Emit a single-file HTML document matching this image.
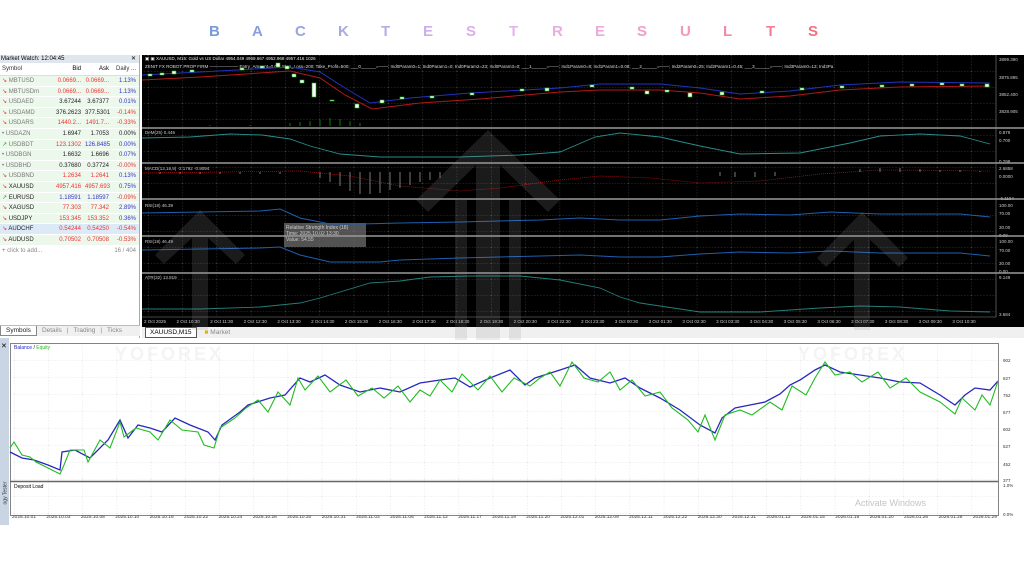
<!DOCTYPE html>
<html><head><meta charset="utf-8"><style>
*{margin:0;padding:0;box-sizing:border-box}
body{width:1024px;height:576px;background:#fff;position:relative;overflow:hidden;font-family:"Liberation Sans",sans-serif}
.t{position:absolute;top:23px;left:0;width:1024px;height:24px}
.t span{position:absolute;font-size:15px;font-weight:bold;top:0}
.mw{position:absolute;left:0;top:55px;width:140px;height:283px;background:#fff;border-right:1px solid #aaa;font-size:6px}
.mwh{height:8px;background:#dfe6ee;padding-left:1px;line-height:8px;font-size:6px;position:relative}
.row{display:flex;height:10.6px;line-height:10.6px;border-bottom:1px solid #fff}
.row div{padding:0 2px}
.c1{width:54px;color:#777}.c2{width:29px;text-align:right}.c3{width:28px;text-align:right}.c4{width:27px;text-align:right;color:#33c}
.g{background:#edf8ec}
.r{color:#e33}.k{color:#222}.b{color:#33c}
.tabs{position:absolute;left:0;top:325px;width:140px;height:11px;font-size:6.5px;color:#888;background:#f0f0f0;border-top:1px solid #bbb}
.chart{position:absolute;left:142px;top:55px;width:882px;height:272px;background:#000}
.ax{position:absolute;font-size:4.5px;color:#ccc;white-space:nowrap}
.tb{position:absolute;left:142px;top:327px;width:882px;height:11px;background:#f0f0f0;font-size:6.5px}
.tester{position:absolute;left:0;top:338px;width:1024px;height:187px;background:#fff}
.dl{position:absolute;left:12px;top:515px;width:985px;display:flex;justify-content:space-between;font-size:4.8px;color:#333}
</style></head><body>
<div class="t">
<span style="left:209px;color:#7a9ad8">B</span><span style="left:252px;color:#8aa0dc">A</span><span style="left:295px;color:#9aa6de">C</span><span style="left:338px;color:#a8aae0">K</span><span style="left:381px;color:#b8aee6">T</span><span style="left:423px;color:#cdb0ea">E</span><span style="left:466px;color:#dab0ea">S</span><span style="left:509px;color:#e4b4ec">T</span><span style="left:552px;color:#e8aee0">R</span><span style="left:595px;color:#eeaad8">E</span><span style="left:637px;color:#f29ec8">S</span><span style="left:680px;color:#f398b8">U</span><span style="left:723px;color:#f48aa4">L</span><span style="left:766px;color:#f47e94">T</span><span style="left:808px;color:#f27080">S</span>
</div>

<div class="mw">
<div class="mwh">Market Watch: 12:04:45<span style="position:absolute;right:3px">✕</span></div>
<div class="row" style="background:#fff;border-bottom:1px solid #ddd;height:13px;line-height:13px"><div class="c1" style="color:#333">Symbol</div><div class="c2">Bid</div><div class="c3">Ask</div><div class="c4" style="color:#333">Daily ...</div></div>
<div class="row g"><div class="c1"><span class="r">↘</span> MBTUSD</div><div class="c2 r">0.0669...</div><div class="c3 r">0.0669...</div><div class="c4">1.13%</div></div>
<div class="row g"><div class="c1"><span class="r">↘</span> MBTUSDm</div><div class="c2 r">0.0669...</div><div class="c3 r">0.0669...</div><div class="c4">1.13%</div></div>
<div class="row g"><div class="c1"><span class="r">↘</span> USDAED</div><div class="c2 k">3.67244</div><div class="c3 k">3.67377</div><div class="c4">0.01%</div></div>
<div class="row g"><div class="c1"><span class="r">↘</span> USDAMD</div><div class="c2 k">376.2623</div><div class="c3 k">377.5301</div><div class="c4 r">-0.14%</div></div>
<div class="row g"><div class="c1"><span class="r">↘</span> USDARS</div><div class="c2 r">1440.2...</div><div class="c3 r">1491.7...</div><div class="c4 r">-0.33%</div></div>
<div class="row g"><div class="c1">• USDAZN</div><div class="c2 k">1.6947</div><div class="c3 k">1.7053</div><div class="c4 k">0.00%</div></div>
<div class="row g"><div class="c1"><span style="color:#2a2">↗</span> USDBDT</div><div class="c2 r">123.1302</div><div class="c3 b">126.8485</div><div class="c4">0.00%</div></div>
<div class="row g"><div class="c1">• USDBGN</div><div class="c2 k">1.6632</div><div class="c3 k">1.6696</div><div class="c4">0.07%</div></div>
<div class="row g"><div class="c1">• USDBHD</div><div class="c2 k">0.37680</div><div class="c3 k">0.37724</div><div class="c4 r">-0.00%</div></div>
<div class="row g"><div class="c1"><span class="r">↘</span> USDBND</div><div class="c2 r">1.2634</div><div class="c3 r">1.2641</div><div class="c4">0.13%</div></div>
<div class="row g"><div class="c1" style="color:#222"><span class="r">↘</span> XAUUSD</div><div class="c2 r">4957.416</div><div class="c3 r">4957.693</div><div class="c4">0.75%</div></div>
<div class="row g"><div class="c1" style="color:#222"><span style="color:#2a2">↗</span> EURUSD</div><div class="c2 b">1.18591</div><div class="c3 b">1.18597</div><div class="c4 r">-0.09%</div></div>
<div class="row g"><div class="c1" style="color:#222"><span class="r">↘</span> XAGUSD</div><div class="c2 r">77.303</div><div class="c3 r">77.342</div><div class="c4">2.89%</div></div>
<div class="row g"><div class="c1" style="color:#222"><span class="r">↘</span> USDJPY</div><div class="c2 r">153.345</div><div class="c3 r">153.352</div><div class="c4">0.36%</div></div>
<div class="row" style="background:#dceaf8"><div class="c1" style="color:#222"><span class="r">↘</span> AUDCHF</div><div class="c2 r">0.54244</div><div class="c3 r">0.54250</div><div class="c4 r">-0.54%</div></div>
<div class="row g"><div class="c1" style="color:#222"><span class="r">↘</span> AUDUSD</div><div class="c2 r">0.70502</div><div class="c3 r">0.70508</div><div class="c4 r">-0.53%</div></div>
<div class="row"><div class="c1" style="width:111px;color:#888"><span style="color:#2a2">+</span> click to add...</div><div class="c4" style="color:#888">16 / 404</div></div>
</div>
<div class="tabs"><span style="display:inline-block;background:#fff;color:#222;padding:1px 5px;border:1px solid #888;border-top:none">Symbols</span><span style="padding:0 5px">Details</span>|<span style="padding:0 5px">Trading</span>|<span style="padding:0 5px">Ticks</span></div>

<div class="chart">
<div class="ax" style="left:3px;top:1px;color:#eee">▣ ▣ XAUUSD, M15:  Gold vs US Dollar  4954.049 4959.667 4952.968 4957.416  1026</div>
<div class="ax" style="left:3px;top:9px;color:#ddd">ZENIT FX ROBOT PROP FIRM ───────── Entry_Amount=0.01; Stop_Loss=200; Take_Profit=500; ___0______=───; Ind0Param0=1; Ind0Param1=0; Ind0Param2=23; Ind0Param3=0; ___1______=───; Ind1Param0=8; Ind1Param1=0.08; ___2______=───; Ind2Param0=25; Ind2Param1=0.45; ___3______=───; Ind3Param0=13; Ind3Pa</div>
<div class="ax" style="left:3px;top:75px">DeM(25) 0.446</div>
<div class="ax" style="left:3px;top:111px">MACD(13,18,9) -2.1792 -0.9094</div>
<div class="ax" style="left:3px;top:148px">RSI(18) 46.39</div>
<div class="ax" style="left:3px;top:184px">RSI(19) 46.49</div>
<div class="ax" style="left:3px;top:220px">ATR(32) 13.819</div>
<div class="ax" style="left:857px;top:2px">3899.390</div><div class="ax" style="left:857px;top:20px">3875.895</div><div class="ax" style="left:857px;top:37px">3852.400</div><div class="ax" style="left:857px;top:54px">3828.905</div>
<div class="ax" style="left:857px;top:75px">0.879</div><div class="ax" style="left:857px;top:83px">0.700</div><div class="ax" style="left:857px;top:104px">0.298</div>
<div class="ax" style="left:857px;top:111px">2.6858</div><div class="ax" style="left:857px;top:119px">0.0000</div><div class="ax" style="left:857px;top:141px">-6.1164</div>
<div class="ax" style="left:857px;top:148px">100.00</div><div class="ax" style="left:857px;top:156px">70.00</div><div class="ax" style="left:857px;top:170px">30.00</div><div class="ax" style="left:857px;top:178px">0.00</div>
<div class="ax" style="left:857px;top:184px">100.00</div><div class="ax" style="left:857px;top:193px">70.00</div><div class="ax" style="left:857px;top:206px">30.00</div><div class="ax" style="left:857px;top:214px">0.00</div>
<div class="ax" style="left:857px;top:220px">9.149</div><div class="ax" style="left:857px;top:257px">3.684</div>
<div class="ax" style="left:2px;top:264px;width:832px;display:flex;justify-content:space-between"><span>2 Oct 2025</span><span>2 Oct 10:30</span><span>2 Oct 11:30</span><span>2 Oct 12:30</span><span>2 Oct 13:30</span><span>2 Oct 14:30</span><span>2 Oct 15:30</span><span>2 Oct 16:30</span><span>2 Oct 17:30</span><span>2 Oct 18:30</span><span>2 Oct 19:30</span><span>2 Oct 20:30</span><span>2 Oct 22:30</span><span>2 Oct 23:30</span><span>3 Oct 00:30</span><span>3 Oct 01:30</span><span>3 Oct 02:30</span><span>3 Oct 03:30</span><span>3 Oct 04:30</span><span>3 Oct 05:30</span><span>3 Oct 06:30</span><span>3 Oct 07:30</span><span>3 Oct 08:30</span><span>3 Oct 09:30</span><span>3 Oct 10:30</span></div>
<div style="position:absolute;left:142px;top:168px;width:82px;height:24px;background:rgba(150,150,150,.55);font-size:5px;color:#ccc;padding:2px">Relative Strength Index (18)<br>Time: 2025.10.02 13:30<br>Value: 54.55</div>
</div>
<div class="tb"><span style="display:inline-block;margin-left:3px;background:#fff;border:1px solid #555;padding:0 4px;line-height:9px">XAUUSD,M15</span><span style="color:#e8b000;margin-left:8px">■</span> <span style="color:#888">Market</span></div>

<div class="tester">
<div style="position:absolute;left:0;top:0;width:9px;height:187px;background:#c9d5e2"></div>
<div style="position:absolute;left:1px;top:4px;font-size:7px">✕</div>
<div style="position:absolute;left:-6px;top:152px;font-size:5px;transform:rotate(-90deg);color:#334">ogy Tester</div>
<div style="position:absolute;left:14px;top:7px;font-size:5px"><span style="color:#22c">Balance</span> / <span style="color:#2b2">Equity</span></div>
<div style="position:absolute;left:14px;top:146px;font-size:5px">Deposit Load</div>
<div style="position:absolute;left:115px;top:6px;font-size:18px;font-weight:bold;color:#f4f4f4;letter-spacing:3px">YOFOREX</div>
<div style="position:absolute;left:798px;top:6px;font-size:18px;font-weight:bold;color:#f4f4f4;letter-spacing:3px">YOFOREX</div>
<div style="position:absolute;left:855px;top:160px;font-size:9px;color:#c4c4c4">Activate Windows</div>
<div class="ax" style="left:1003px;top:20px;color:#333">902</div><div class="ax" style="left:1003px;top:38px;color:#333">827</div><div class="ax" style="left:1003px;top:55px;color:#333">752</div><div class="ax" style="left:1003px;top:72px;color:#333">677</div><div class="ax" style="left:1003px;top:89px;color:#333">602</div><div class="ax" style="left:1003px;top:106px;color:#333">527</div><div class="ax" style="left:1003px;top:124px;color:#333">452</div><div class="ax" style="left:1003px;top:140px;color:#333">377</div><div class="ax" style="left:1003px;top:145px;color:#333">1.0%</div><div class="ax" style="left:1003px;top:174px;color:#333">0.0%</div>
</div>
<div class="dl"><span>2025.10.01</span><span>2025.10.03</span><span>2025.10.08</span><span>2025.10.10</span><span>2025.10.16</span><span>2025.10.22</span><span>2025.10.24</span><span>2025.10.28</span><span>2025.10.30</span><span>2025.10.31</span><span>2025.11.03</span><span>2025.11.06</span><span>2025.11.12</span><span>2025.11.17</span><span>2025.11.19</span><span>2025.11.20</span><span>2025.12.01</span><span>2025.12.09</span><span>2025.12.11</span><span>2025.12.22</span><span>2025.12.30</span><span>2025.12.31</span><span>2026.01.13</span><span>2026.01.15</span><span>2026.01.16</span><span>2026.01.20</span><span>2026.01.26</span><span>2026.01.28</span><span>2026.01.29</span></div>

<svg style="position:absolute;left:0;top:0" width="1024" height="576" viewBox="0 0 1024 576">
<defs>
<pattern id="gd" width="34.3" height="16" patternUnits="userSpaceOnUse" x="148" y="55"><path d="M0 0V16" stroke="#777" stroke-width=".5" stroke-dasharray="1.5 1.5"/><path d="M0 0H34.3" stroke="#777" stroke-width=".5" stroke-dasharray="1.5 1.5"/></pattern>
<pattern id="gw" width="34.2" height="17" patternUnits="userSpaceOnUse" x="14" y="343"><path d="M0 0V17" stroke="#ccc" stroke-width=".5" stroke-dasharray="1.5 1.5"/><path d="M0 0H34.2" stroke="#ccc" stroke-width=".5" stroke-dasharray="1.5 1.5"/></pattern>
</defs>
<rect x="142" y="55" width="854" height="262" fill="url(#gd)"/>
<g stroke="#999" stroke-width="1.6"><path d="M142 128H1024M142 163H1024M142 199H1024M142 236H1024M142 273H1024"/></g>
<path d="M996 55V317H142" stroke="#888" stroke-width=".6" fill="none"/>
<path d="M142 75L200 72L290 67L320 72L345 88L370 103L410 98L470 93L560 88L600 84L660 84L700 88L740 94L790 91L840 85L900 82L990 83" stroke="#2233bb" stroke-width="1" fill="none"/>
<path d="M142 80L200 77L290 71L320 78L345 95L372 109L420 103L480 99L560 92L600 90L660 90L700 93L740 99L790 96L840 90L900 87L990 86" stroke="#b01818" stroke-width="1" fill="none"/>
<g fill="#fff" stroke="#1b1"  stroke-width=".6">
<rect x="148" y="74" width="4" height="2"/><rect x="160" y="73" width="4" height="2"/><rect x="172" y="71" width="4" height="3"/><rect x="190" y="70" width="4" height="2"/><rect x="240" y="68" width="4" height="2"/><rect x="260" y="66" width="4" height="2"/><rect x="276" y="63" width="4" height="4"/><rect x="285" y="66" width="4" height="3"/><rect x="292" y="74" width="4" height="3"/><rect x="300" y="80" width="4" height="3"/><rect x="312" y="83" width="4" height="14"/><rect x="330" y="100" width="4" height="1"/><rect x="355" y="104" width="4" height="4"/><rect x="380" y="100" width="4" height="3"/><rect x="400" y="97" width="4" height="2"/><rect x="430" y="96" width="4" height="2"/><rect x="470" y="93" width="4" height="2"/><rect x="520" y="89" width="4" height="2"/><rect x="545" y="88" width="4" height="3"/><rect x="590" y="85" width="4" height="2"/><rect x="630" y="87" width="4" height="2"/><rect x="645" y="91" width="4" height="3"/><rect x="665" y="90" width="4" height="2"/><rect x="688" y="93" width="4" height="4"/><rect x="720" y="92" width="4" height="3"/><rect x="760" y="91" width="4" height="2"/><rect x="800" y="88" width="4" height="2"/><rect x="840" y="86" width="4" height="2"/><rect x="880" y="85" width="4" height="2"/><rect x="910" y="84" width="4" height="2"/><rect x="940" y="83" width="4" height="2"/><rect x="960" y="84" width="4" height="2"/><rect x="985" y="84" width="4" height="3"/>
</g>
<g stroke="#1a1" stroke-width=".7"><path d="M290 126V123M300 126V122M310 126V121M320 126V120M330 126V118M340 126V119M350 126V121M360 126V123M210 126V125M250 126V125"/></g>
<path d="M142 138L190 137L230 134L262 135L290 139L310 146L340 154L380 157L460 157L520 155L560 152L595 137L620 133L660 137L700 146L740 154L800 153L850 143L880 136L920 134L960 136L990 144" stroke="#2a8c8c" stroke-width=".9" fill="none"/>
<path d="M142 173L300 171L350 176L400 186L460 191L500 188L560 180L600 176L650 178L700 183L760 181L820 174L880 170L990 171" stroke="#b11" stroke-width=".7" stroke-dasharray="1 1" fill="none"/>
<g stroke="#ccc" stroke-width=".6"><path d="M320 172V178M330 172V182M340 172V186M350 172V191M360 172V194M370 172V194M380 172V193M390 172V190M400 172V188M410 172V185M420 172V182M430 172V180M440 172V178M720 172V176M735 172V177M755 172V177M775 172V176M860 172V169M880 172V168M900 172V168M920 172V169M940 172V170M960 172V170M980 172V171M160 172V174M180 172V174M200 172V174M220 172V174M240 172V174M260 172V174M280 172V174"/></g>
<path d="M142 213L200 212L260 211L280 209L300 218L330 224L360 224L400 223L460 222L540 220L580 218L620 220L660 220L700 216L740 214L790 215L830 212L880 214L960 214L990 217" stroke="#1f5fb0" stroke-width="1" fill="none"/>
<path d="M142 250L200 249L260 248L280 247L300 255L330 262L380 262L400 260L460 258L540 256L580 255L620 257L660 257L700 254L740 252L790 253L830 251L880 253L960 253L990 256" stroke="#1f5fb0" stroke-width="1" fill="none"/>
<path d="M142 309L200 309L260 307L300 303L320 298L340 292L370 283L400 281L430 277L470 276L520 276L560 280L600 288L620 297L640 303L700 312L760 312L820 308L860 306L900 307L950 311L990 312" stroke="#247f7a" stroke-width=".9" fill="none"/>
<rect x="10" y="343" width="988" height="172" fill="url(#gw)"/>
<rect x="10.5" y="343.5" width="988" height="172" fill="none" stroke="#666" stroke-width=".8"/>
<path d="M10 481.5H998" stroke="#666" stroke-width="1.4"/>
<path d="M10 452L22 458L34 460L48 465L60 470L62 452L75 450L90 458L108 440L120 420L128 438L138 425L150 428L162 432L175 418L190 425L208 432L215 440L222 425L240 412L248 405L270 398L285 395L300 378L310 382L325 375L340 385L360 392L380 388L400 392L420 383L440 380L455 378L470 387L490 378L510 370L525 385L535 378L560 370L575 365L590 378L610 383L625 378L640 388L660 398L680 410L700 425L715 433L722 418L735 408L750 405L765 402L780 394L790 385L800 380L815 370L825 365L840 372L860 375L880 378L900 382L920 383L940 395L955 405L965 395L975 388L990 390L998 381" stroke="#2727c0" stroke-width="1.3" fill="none"/>
<path d="M10 448L14 442L22 455L30 457L36 462L48 468L60 474L64 465L70 450L84 450L88 462L100 440L110 448L120 422L124 437L136 428L150 432L158 440L170 420L182 430L198 432L204 445L214 448L220 428L235 418L246 408L258 400L268 412L278 392L290 405L298 378L305 390L318 376L330 392L346 380L358 396L372 388L384 398L398 386L410 402L420 390L430 396L440 380L452 392L462 374L478 390L490 376L502 392L514 378L530 386L540 378L550 372L560 386L572 362L584 378L598 382L610 372L620 390L632 380L645 396L660 392L672 408L688 420L698 432L705 415L715 440L725 415L740 410L752 415L770 402L782 410L792 386L806 395L815 378L825 362L835 375L850 372L862 382L878 372L890 388L906 378L920 392L940 402L955 414L962 398L975 410L982 395L990 405L998 381" stroke="#22bb22" stroke-width="1.1" fill="none"/>
<g fill="rgba(150,150,150,0.18)">
<path d="M488 130L560 200L548 212L500 165V340H476V165L428 212L416 200Z"/>
<path d="M455 200H467V340H455ZM509 200H521V340H509Z"/>
<path d="M200 210L245 255L236 264L208 238V330H192V238L164 264L155 255Z"/>
<path d="M862 212L908 258L899 267L870 240V330H854V240L826 267L817 258Z"/>
</g>
</svg>
</body></html>
